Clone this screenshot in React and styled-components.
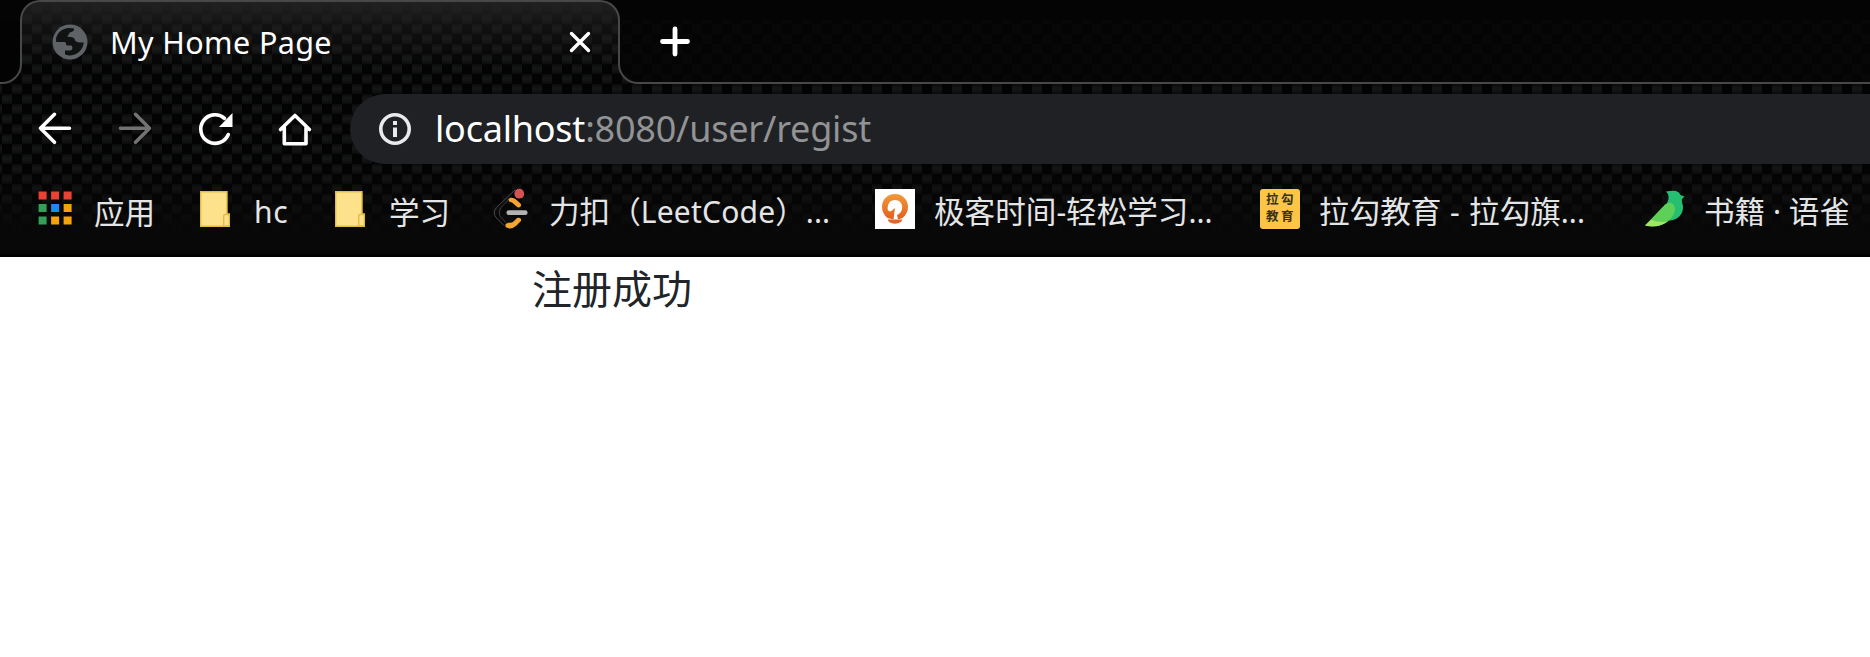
import React from "react";
import styled, { createGlobalStyle, css } from "styled-components";

const GlobalStyle = createGlobalStyle`
  * { box-sizing: border-box; }
  html, body { margin: 0; height: 100%; overflow: hidden; background: #fff; }
  body { font-family: "Noto Sans", "Noto Sans CJK SC", sans-serif; }
`;

const carbon = css`
  background-color: #030303;
  background-image:
    linear-gradient(rgba(3, 3, 3, 0.6) 0, rgba(3, 3, 3, 0) 4px, rgba(3, 3, 3, 0.1) 6px, rgba(3, 3, 3, 0.6) 10px),
    conic-gradient(#151616 25%, #030303 0 50%, #151616 0 75%, #030303 0);
  background-size: 10px 10px, 20px 20px;
  background-position: 2px 4px;
  background-attachment: fixed;
`;

const Browser = styled.div`
  width: 100%;
  height: 657px;
  display: flex;
  flex-direction: column;
  background: #fff;
`;

const Chrome = styled.header`
  ${carbon}
  height: 257px;
  display: flex;
  flex-direction: column;
  flex: none;
`;

const TabStrip = styled.div`
  height: 84px;
  display: flex;
  background: linear-gradient(#040404, #040404) top / 100% 24px no-repeat;
`;

const StripEdge = styled.div`
  width: 22px;
  flex: none;
  background: #030303;
  border: 2px solid #484848;
  border-width: 0 2px 2px 0;
  border-bottom-right-radius: 20px;
  clip-path: inset(20px 0 0 0);
`;

const StripRest = styled.div`
  flex: 1;
  margin-left: -2px;
  background-color: #040404;
  background-image: conic-gradient(#070707 25%, #040404 0 50%, #070707 0 75%, #040404 0);
  background-size: 20px 20px;
  background-attachment: fixed;
  background-position: 2px 4px;
  border: 2px solid #484848;
  border-width: 0 0 2px 2px;
  border-bottom-left-radius: 20px;
  padding: 21px 0 0 35px;
  clip-path: inset(20px 0 0 0);
`;

const Tab = styled.div`
  width: 600px;
  height: 66px;
  flex: none;
  margin-left: -2px;
  padding: 0 23px 0 30px;
  display: flex;
  align-items: center;
  border: 2px solid #484848;
  border-bottom: 0;
  border-radius: 20px 20px 0 0;
  background-image:
    linear-gradient(180deg, rgba(34, 34, 34, 0.95) 0, rgba(34, 34, 34, 0.45) 24px, rgba(30, 30, 30, 0) 66px),
    linear-gradient(rgba(3, 3, 3, 0.6) 0, rgba(3, 3, 3, 0) 4px, rgba(3, 3, 3, 0.1) 6px, rgba(3, 3, 3, 0.6) 10px),
    conic-gradient(#161717 25%, #040404 0 50%, #161717 0 75%, #040404 0);
  background-size: auto, 10px 10px, 20px 20px;
  background-attachment: scroll, fixed, fixed;
  background-position: 0 0, 2px 4px, 2px 4px;
`;

const TabTitle = styled.span`
  flex: 1;
  margin: 16px 0 0 22px;
  font-size: 30.5px;
  line-height: 40px;
  letter-spacing: 0.38px;
  color: #fff;
  white-space: nowrap;
`;

const Icon = styled.svg`
  display: block;
  flex: none;
  overflow: visible;
  width: ${(p) => p.$size || 40}px;
  height: ${(p) => p.$size || 40}px;
  margin-top: ${(p) => p.$drop || 0}px;
`;

const Toolbar = styled.div`
  height: 80px;
  padding: 10px 0 0 35px;
  display: flex;
  align-items: flex-start;
`;

const NavGroup = styled.nav`
  display: flex;
  gap: 40px;
  padding-top: 15px;
`;

const AddressBar = styled.div`
  flex: 1;
  height: 70px;
  margin-left: 35px;
  padding-left: 25px;
  display: flex;
  align-items: center;
  gap: 20px;
  background: #202124;
  border-radius: 35px 0 0 35px;
`;

const Url = styled.span`
  font-size: 36px;
  line-height: 48px;
  letter-spacing: -0.22px;
  color: #919395;
  white-space: nowrap;
`;

const Host = styled.span`
  color: #fff;
`;

const Bookmarks = styled.div`
  flex: 1;
  display: flex;
  align-items: flex-start;
  gap: 40px;
  padding: 25px 0 0 35px;
  background: linear-gradient(rgba(8, 8, 8, 0) 0, rgba(8, 8, 8, 0.35) 30px, #080808 68px);
  border-bottom: 3px solid #020202;
`;

const Bookmark = styled.div`
  display: flex;
  align-items: center;
  gap: 19px;
  height: 40px;
  flex: none;
`;

const Label = styled.span`
  width: ${(p) => p.$width + 1}px;
  padding-top: 5px;
  font-size: 30.6px;
  line-height: 40px;
  color: #e4e5e6;
  white-space: nowrap;
`;

const Latin = styled.span`
  font-size: 30px;
  letter-spacing: ${(p) => p.$track || 0}px;
`;

const GeekTile = styled.div`
  width: 40px;
  height: 40px;
  background: #fff;
`;

const LagouTile = styled.div`
  width: 40px;
  height: 40px;
  padding: 3px 6px;
  display: grid;
  grid-template-columns: 13px 13px;
  column-gap: 2px;
  grid-template-rows: 15px 15px;
  row-gap: 2px;
  border-radius: 3px;
  background: #fbc546;
  color: #37301b;
  font: 700 12.5px/14px "Noto Sans CJK SC", sans-serif;
`;

const Page = styled.main`
  flex: 1;
  padding: 2px 0 0 532px;
  font-size: 40px;
  line-height: 60px;
  color: #212529;
`;

const Globe = () => (
  <Icon viewBox="0 0 36 36" $size={36} $drop={16}>
    <circle cx="18" cy="18" r="17.5" fill="#5f6368" />
    <path
      d="M4 14.500C5.500 8.500 10.500 4.300 17 4L22 4.500C22.500 6.500 21 8 17.500 8.500C17.500 11 15.500 10.500 15.500 12.500C18 13.500 22 12.500 22.800 15.500C23.500 18.500 27 19 31.700 18.200C31.500 25 25.500 31.500 17 31.500L13 30.500V26.500H18.500C20.500 26 21 23.500 19.500 21.500H15.500C13 21.500 15 18 12.500 18H4.200Z"
      fill="#111212"
    />
  </Icon>
);

const Stroke = ({ color = "#fff", width = 3.6, d, ...rest }) => (
  <path d={d} fill="none" stroke={color} strokeWidth={width} strokeLinecap="round" strokeLinejoin="round" {...rest} />
);

const FolderIcon = () => (
  <Icon viewBox="0 0 40 40">
    <path d="M5.700 2.700H32V25H34.300V37.300H5.700Z" fill="#fde28b" stroke="#e2bd42" strokeWidth="1.400" />
    <path d="M28.700 37V27.500Q28.700 25.200 31 25.200Q34.300 25.200 34.300 27V37Z" fill="#fde28b" stroke="#e2bd42" strokeWidth="1.400" />
  </Icon>
);

const APP_COLORS = ["#ea4336", "#ea4336", "#ea4336", "#34a056", "#1f87f0", "#f5a30a", "#34a056", "#f5a30a", "#f5a30a"];

const AppsIcon = () => (
  <Icon viewBox="0 0 40 40">
    {APP_COLORS.map((fill, i) => (
      <rect key={i} x={3.6 + (i % 3) * 12.5} y={2.5 + Math.floor(i / 3) * 12.5} width="8" height="8" fill={fill} />
    ))}
  </Icon>
);

const LeetIcon = () => (
  <Icon viewBox="0 0 40 40">
    <Stroke d="M25 1L6.500 18.500Q2 24 6.500 29L14 36.500" color="#4b4b4b" width={1} />
    <Stroke d="M20 9L11 18.500Q7.500 24 11 28.500L16 33.500" color="#3e3e3e" width={1} />
    <path d="M18.500 10Q22 7.500 26 10.500L30.500 14.500Q32 17 29.500 18.300Q27.500 19 26 17L22 13.500L19 12.500Z" fill="#f4a431" />
    <path d="M15.500 35L19 33.500Q22 34.500 24 32L27 29Q29.500 28 31 30Q31.500 32 30 33L26.500 36.500Q21 41.500 15.500 38Z" fill="#f4a431" />
    <path d="M18.800 23.700H35.200" stroke="#b3b1b1" strokeWidth="4.800" strokeLinecap="round" />
    <circle cx="29.300" cy="4.700" r="4.900" fill="#d45353" />
  </Icon>
);

const GeekIcon = () => (
  <GeekTile>
    <Icon viewBox="0 0 40 40">
      <defs>
        <linearGradient id="geek" x1="0" y1="0" x2="0" y2="1">
          <stop offset="0" stopColor="#f29a38" />
          <stop offset="1" stopColor="#e35f20" />
        </linearGradient>
      </defs>
      <path
        d="M20 5C12 5 7 11 7 18C7 22.500 9 26 12.500 29L18.500 30.500L20 19L15.500 22.500L12.800 21.500C12 15 15 11 20 11C25 11 28 15 27 20C26.500 23 24.500 25 22 26L23 30.500L27.500 29C31 26 33 22.500 33 18C33 11 28 5 20 5Z"
        fill="url(#geek)"
      />
      <path d="M12.500 30.500H27.500L26 33Q20 36.500 14 33Z" fill="#e2662b" />
    </Icon>
  </GeekTile>
);

const LagouIcon = () => (
  <LagouTile>
    <span>拉</span>
    <span>勾</span>
    <span>教</span>
    <span>育</span>
  </LagouTile>
);

const BirdIcon = () => (
  <Icon viewBox="0 0 40 40">
    <path d="M21 2.500Q27 1.300 31 2Q34.500 3 35.500 6L39.500 7.500L37 10Q36.500 12 38 17C38.500 25 33 31.500 24 31.500L16 28L22.500 13Q25.500 7 21 2.500Z" fill="#26be70" />
    <path d="M0 36.500L20 15.500Q24 12.500 28 15Q31.500 19 29 24.500C25 34 14 39.500 0 36.500Z" fill="#5cd057" />
    <path d="M0 36.500L6 30.800Q15 34 22.500 32.500C16 37.500 8 38.500 0 36.500Z" fill="#a2e565" />
  </Icon>
);

export default function App() {
  return (
    <Browser>
      <GlobalStyle />
      <Chrome>
        <TabStrip>
          <StripEdge />
          <Tab>
            <Globe />
            <TabTitle>My Home Page</TabTitle>
            <Icon viewBox="0 0 30 30" $size={30} $drop={16}>
              <Stroke d="M6.500 6.500L23.500 23.500M23.500 6.500L6.500 23.500" width={3.4} />
            </Icon>
          </Tab>
          <StripRest>
            <Icon viewBox="0 0 40 40">
              <Stroke d="M20 8V33M7.500 20.500H32.500" width={4.8} />
            </Icon>
          </StripRest>
        </TabStrip>
        <Toolbar>
          <NavGroup>
            <Icon viewBox="0 0 40 40">
              <Stroke d="M34.500 19.300H5.500M19.500 5.300L5.500 19.300L19.500 33.300" />
            </Icon>
            <Icon viewBox="0 0 40 40">
              <Stroke d="M5.500 19.300H34.500M20.500 5.300L34.500 19.300L20.500 33.300" color="#727272" />
            </Icon>
            <Icon viewBox="0 0 40 40">
              <Stroke d="M33.300 25.500A14.300 14.300 0 1 1 29.500 9.300" />
              <path d="M37.500 4V18H24Z" fill="#fff" />
            </Icon>
            <Icon viewBox="0 0 40 40">
              <Stroke d="M5.500 20.500L20 6.500L34.500 20.500M9.300 18.500V34.800H31V18.500" />
            </Icon>
          </NavGroup>
          <AddressBar>
            <Icon viewBox="0 0 40 40">
              <circle cx="20" cy="20" r="14.200" fill="none" stroke="#e8eaed" strokeWidth="3.600" />
              <path d="M18 18.500H22V28H18ZM18 12H22V16H18Z" fill="#e8eaed" />
            </Icon>
            <Url>
              <Host>localhost</Host>:8080/user/regist
            </Url>
          </AddressBar>
        </Toolbar>
        <Bookmarks>
          <Bookmark><AppsIcon /><Label $width={60}>应用</Label></Bookmark>
          <Bookmark><FolderIcon /><Label $width={35}><Latin $track={0.6}>hc</Latin></Label></Bookmark>
          <Bookmark><FolderIcon /><Label $width={60}>学习</Label></Bookmark>
          <Bookmark><LeetIcon /><Label $width={285}>力扣（<Latin $track={0.2}>LeetCode</Latin>）<Latin>...</Latin></Label></Bookmark>
          <Bookmark><GeekIcon /><Label $width={285}>极客时间<Latin>-</Latin>轻松学习<Latin>...</Latin></Label></Bookmark>
          <Bookmark><LagouIcon /><Label $width={285}>拉勾教育<Latin $track={0.8}> - </Latin>拉勾旗<Latin>...</Latin></Label></Bookmark>
          <Bookmark><BirdIcon /><Label $width={145}>书籍<Latin> · </Latin>语雀</Label></Bookmark>
        </Bookmarks>
      </Chrome>
      <Page>注册成功</Page>
    </Browser>
  );
}
